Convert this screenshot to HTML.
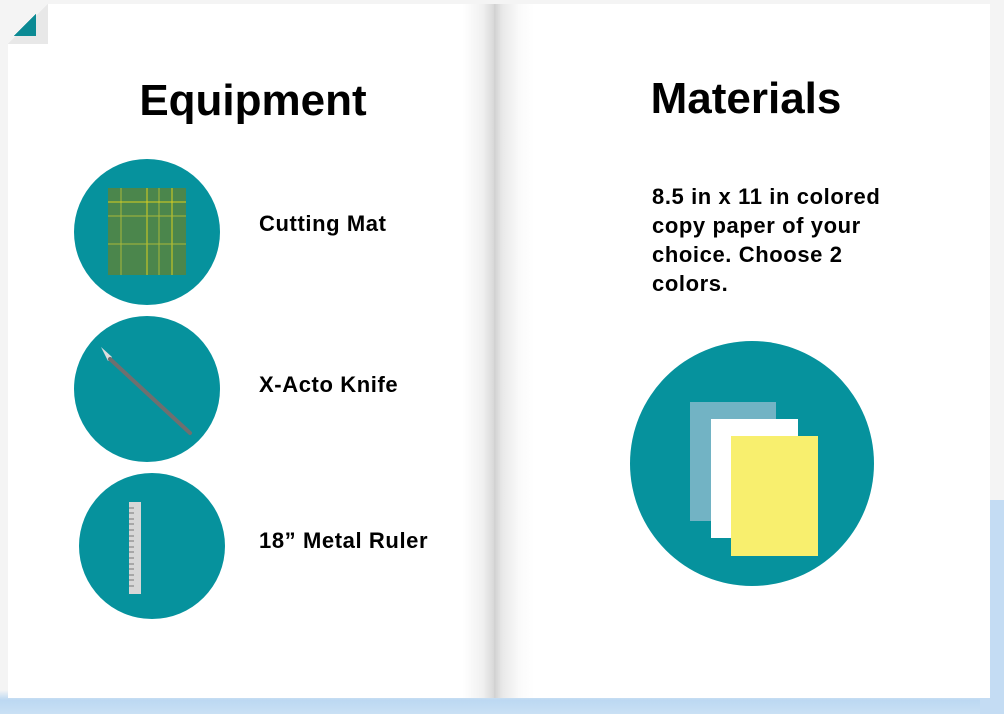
<!DOCTYPE html>
<html><head><style>
body{margin:0;width:1004px;height:714px;overflow:hidden;background:linear-gradient(#f4f4f4 0,#f4f4f4 690px,#bcd8f2 700px,#c9e0f4 714px);font-family:"Liberation Sans",Arial,sans-serif;position:relative}
.page{position:absolute;background:#fff;top:4px;height:694px}
.c{position:absolute;border-radius:50%;background:#06929d}
.t{position:absolute;font-weight:bold;color:#000}
h1{position:absolute;margin:0;font-size:44px;font-weight:bold;text-align:center}
.l{font-size:22px;letter-spacing:0.6px}
</style></head><body>
<div style="position:absolute;left:980px;top:500px;width:24px;height:214px;background:#c4dcf3"></div>
<div class="page" style="left:8px;width:486px;background:linear-gradient(90deg,#fff 0,#fff 455px,#f0f0f0 475px,#d8d8d8 486px)"></div>
<div class="page" style="left:494px;width:496px;background:linear-gradient(90deg,#d0d0d0 0,#e8e8e8 8px,#fafafa 25px,#fff 40px)"></div>
<div style="position:absolute;left:8px;top:4px;width:40px;height:40px;background:linear-gradient(135deg,#f4f4f4 50%,#e8e8e8 50%)"></div>
<div style="position:absolute;left:14px;top:14px;width:22px;height:22px;background:linear-gradient(135deg,transparent 50%,#0b8a94 50%)"></div>
<h1 style="left:8px;width:490px;top:76px">Equipment</h1>
<h1 style="left:498px;width:496px;top:74px">Materials</h1>
<div class="c" style="left:74px;top:159px;width:146px;height:146px"></div>
<svg style="position:absolute;left:108px;top:188px" width="78" height="87"><rect width="78" height="87" fill="#4b864c"/><g stroke="#a8b83a" stroke-width="1"><line x1="13" y1="0" x2="13" y2="87"/><line x1="39" y1="0" x2="39" y2="87" stroke="#d8d020"/><line x1="51" y1="0" x2="51" y2="87"/><line x1="64" y1="0" x2="64" y2="87" stroke="#d8d020"/><line x1="0" y1="14" x2="78" y2="14" stroke="#d8d020"/><line x1="0" y1="28" x2="78" y2="28"/><line x1="0" y1="56" x2="78" y2="56"/></g></svg>
<div class="t l" style="left:259px;top:211px">Cutting Mat</div>
<div class="c" style="left:74px;top:316px;width:146px;height:146px"></div>
<svg style="position:absolute;left:98px;top:344px" width="100" height="95"><polygon points="3,3 14,13 10,17" fill="#ddd"/><line x1="12" y1="15" x2="92" y2="89" stroke="#6f6f6f" stroke-width="4" stroke-linecap="round"/></svg>
<div class="t l" style="left:259px;top:372px">X-Acto Knife</div>
<div class="c" style="left:79px;top:473px;width:146px;height:146px"></div>
<svg style="position:absolute;left:129px;top:502px" width="12" height="92"><rect width="12" height="92" fill="#d7d7d7"/><g stroke="#777" stroke-width="1"><path d="M0 6h5M0 11h5M0 17h5M0 22h5M0 28h5M0 34h5M0 39h5M0 45h5M0 50h5M0 56h5M0 62h5M0 67h5M0 73h5M0 78h5M0 84h5"/></g></svg>
<div class="t l" style="left:259px;top:528px">18” Metal Ruler</div>
<div class="t" style="left:652px;top:182px;font-size:22px;letter-spacing:0.6px;line-height:29px">8.5 in x 11 in colored<br>copy paper of your<br>choice. Choose 2<br>colors.</div>
<div class="c" style="left:630px;top:341px;width:244px;height:245px"></div>
<div style="position:absolute;left:690px;top:402px;width:86px;height:119px;background:#72b3c4"></div>
<div style="position:absolute;left:711px;top:419px;width:87px;height:119px;background:#fff"></div>
<div style="position:absolute;left:731px;top:436px;width:87px;height:120px;background:#f8ef6e"></div>
</body></html>
